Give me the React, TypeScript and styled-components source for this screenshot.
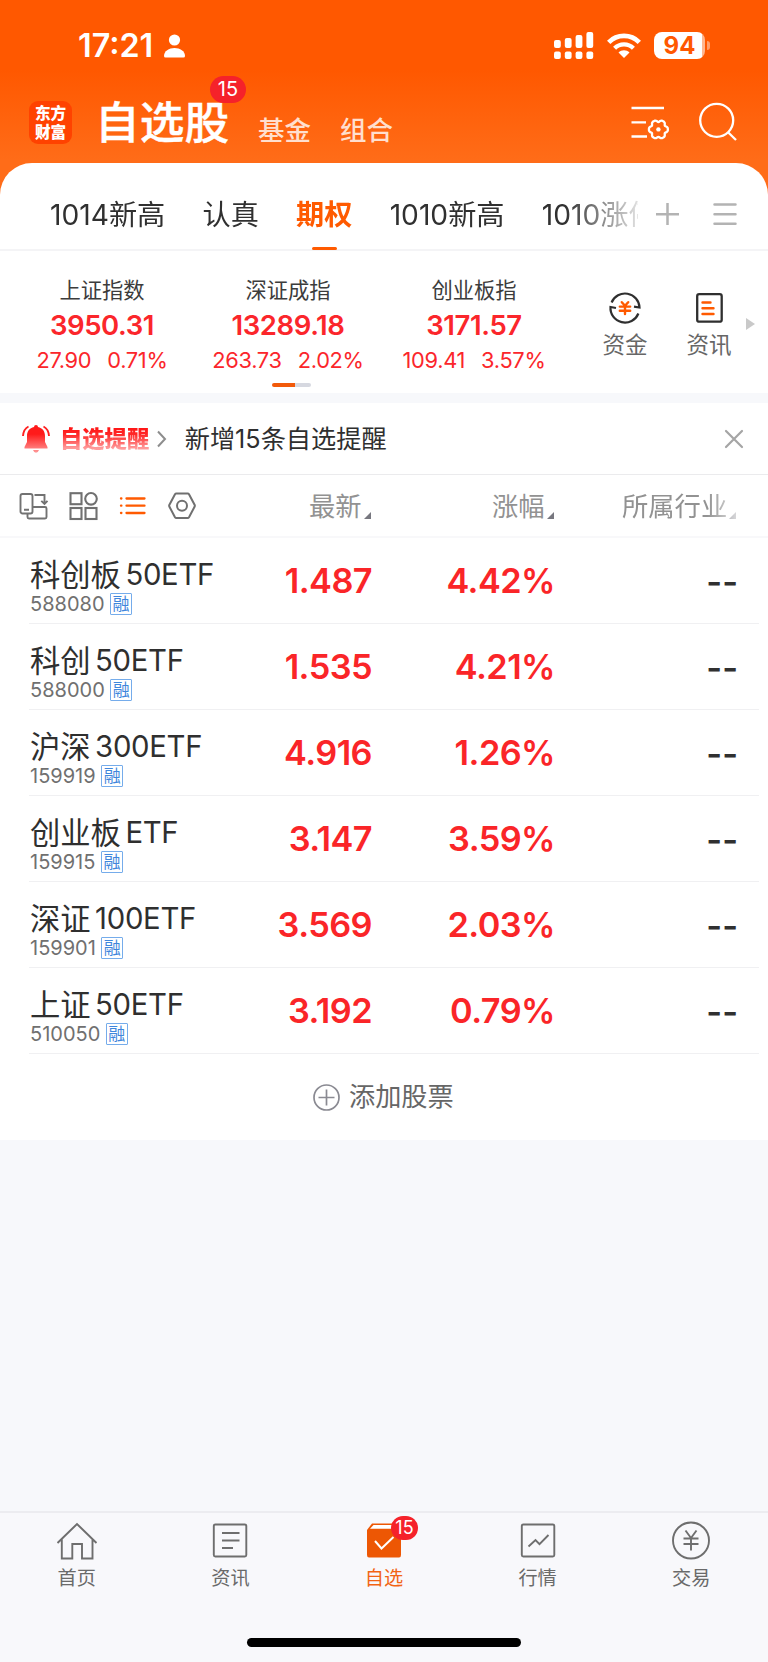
import React from 'react';
import styled, { createGlobalStyle, css } from 'styled-components';

const GlobalStyle = createGlobalStyle`
  * { box-sizing: border-box; }
  body {
    margin: 0;
    background: #f7f8fb;
    font-family: Inter, "Noto Sans CJK SC", sans-serif;
    color: #2f2f2f;
  }
  svg { display: block; flex: none; overflow: visible; }
`;

const Screen = styled.div`
  width: 768px;
  height: 1662px;
  display: flex;
  flex-direction: column;
  overflow: hidden;
  background: #f7f8fb;
`;

const Hero = styled.header`
  height: 198px;
  margin-bottom: -35px;
  flex: none;
  background: linear-gradient(#ff5800 0, #ff5800 70px, #ff6c18 160px);
`;

const StatusBar = styled.div`
  height: 78px;
  padding: 13px 58px 0 78px;
  display: flex;
  align-items: center;
  color: #fff;
`;

const Clock = styled.span`
  font-size: 32.3px;
  line-height: 40px;
  font-weight: 600;
  width: 86px;
  padding-top: 1px;
`;

const StatusIcons = styled.div`
  margin-left: auto;
  display: flex;
  align-items: center;
`;

const Battery = styled.div`
  width: 51px;
  height: 27px;
  margin-left: 13px;
  border-radius: 8px;
  background: linear-gradient(90deg, #fff 94%, #ffb68f 94%);
  color: #ff5800;
  font-size: 24px;
  line-height: 27px;
  font-weight: 700;
  text-align: center;
`;

const BatteryTip = styled.div`
  width: 3px;
  height: 9px;
  margin-left: 2px;
  border-radius: 0 4px 4px 0;
  background: #ff9d6b;
`;

const TitleBar = styled.div`
  height: 85px;
  padding: 0 31px 0 29px;
  display: flex;
`;

const Logo = styled.div`
  width: 43px;
  height: 43px;
  margin-top: 23px;
  border-radius: 9px;
  background: #ff4200;
  color: #fff;
  font-family: "Noto Sans CJK SC", sans-serif;
  font-size: 15.6px;
  line-height: 18.5px;
  font-weight: 900;
  text-align: center;
  padding-top: 2px;
`;

const Title = styled.h1`
  position: relative;
  margin: 21px 0 0 23px;
  width: 163px;
  font-size: 44.7px;
  line-height: 48px;
  font-weight: 500;
  -webkit-text-stroke: 0.4px #fff;
  color: #fff;
`;

const Badge = styled.span<{ $small?: boolean }>`
  position: absolute;
  color: #fff;
  background: #f5222a;
  text-align: center;
  font-weight: 400;
  -webkit-text-stroke: 0;
  ${(p) =>
    p.$small
      ? css`left: 27px; top: -5px; width: 27px; height: 24px; border-radius: 12px; font-size: 18px; line-height: 24px;`
      : css`left: 115px; top: -23px; width: 36px; height: 27px; border-radius: 14px; font-size: 20px; line-height: 27px;`}
`;

const TitleLink = styled.span`
  width: 82px;
  margin-top: 34px;
  font-size: 26.5px;
  line-height: 36px;
  color: #ffdfce;
  font-weight: 500;
`;

const TitleIcons = styled.div`
  margin-left: auto;
  padding-top: 25px;
  display: flex;
  gap: 30px;
`;

const Sheet = styled.main`
  height: 977px;
  flex: none;
  background: #fff;
  border-radius: 32px 32px 0 0;
  position: relative;
`;

const GroupTabs = styled.nav`
  height: 88px;
  border-bottom: 2px solid #f4f4f6;
  padding-left: 50px;
  display: flex;
`;

const TabStrip = styled.div`
  width: 588px;
  height: 88px;
  display: flex;
  gap: 37.2px;
  overflow: hidden;
  white-space: nowrap;
  mask-image: linear-gradient(90deg, #000 515px, rgba(0, 0, 0, 0.15) 588px);
`;

const GroupTab = styled.span<{ $active?: boolean }>`
  flex: none;
  height: 88px;
  display: flex;
  flex-direction: column;
  align-items: center;
  font-size: 28.2px;
  line-height: 40px;
  padding-top: 32px;
  color: ${(p) => (p.$active ? '#ff5a00' : '#303030')};
  font-weight: ${(p) => (p.$active ? 700 : 400)};
`;

const TabMark = styled.i`
  width: 25px;
  height: 3px;
  margin-top: 12px;
  border-radius: 2px;
  background: #ff5a00;
`;

const TabTools = styled.div`
  display: flex;
  gap: 35px;
  padding: 40px 0 0 18px;
`;

const IndexPanel = styled.section`
  height: 142px;
  padding-left: 9px;
  display: flex;
`;

const Indices = styled.div`
  width: 558px;
  margin-right: 16px;
  flex: none;
  display: grid;
  grid-template-columns: repeat(3, 186px);
  grid-template-rows: 132px 4px;
`;

const IndexCard = styled.div`
  display: flex;
  flex-direction: column;
  align-items: center;
  padding-top: 23px;
  color: #fb262b;
`;

const IndexName = styled.span`
  font-size: 21.3px;
  line-height: 32px;
  color: #3c3c3c;
`;

const IndexValue = styled.span`
  font-size: 27.5px;
  line-height: 38px;
  font-weight: 600;
  letter-spacing: -0.4px;
`;

const IndexChange = styled.span`
  display: flex;
  gap: 16px;
  font-size: 21.8px;
  line-height: 32px;
  letter-spacing: -0.3px;
`;

const Pager = styled.div`
  grid-column: 2;
  justify-self: center;
  margin-left: 7px;
  width: 39px;
  height: 4px;
  border-radius: 2px;
  background: linear-gradient(90deg, #f25a0a 60%, #d6d8e0 60%);
`;

const Shortcut = styled.div`
  width: 84px;
  flex: none;
  padding-top: 41px;
  display: flex;
  flex-direction: column;
  align-items: center;
  font-size: 22.5px;
  line-height: 32px;
  color: #666;
  svg { margin-bottom: 5px; }
`;

const MoreArrow = styled.i`
  margin: 67px 0 0 -5px;
  flex: none;
  width: 0;
  height: 0;
  border: solid transparent;
  border-width: 6px 0 6px 9px;
  border-left-color: #c9c9c9;
`;

const Divider = styled.div`
  height: 10px;
  background: #f7f8fb;
`;

const AlertBar = styled.section`
  height: 72px;
  border-bottom: 1px solid #ebebed;
  display: flex;
  align-items: center;
  padding: 0 25px 0 21px;
`;

const AlertLabel = styled.b`
  margin: -3px 8px 0 9px;
  font-family: "Noto Sans CJK SC", sans-serif;
  font-size: 22.3px;
  line-height: 32px;
  font-weight: 900;
  background: linear-gradient(#ff1212 6px, #ff2a2a 14px, #ff9a9a 27px);
  background-clip: text;
  color: transparent;
`;

const AlertText = styled.span`
  flex: 1;
  margin-left: 18.5px;
  font-size: 25.2px;
  line-height: 36px;
`;

const TableHead = styled.div`
  height: 63px;
  border-bottom: 2px solid #f8f8fa;
  padding-left: 19px;
  display: flex;
  align-items: center;
`;

const ViewModes = styled.div`
  width: 290px;
  display: flex;
  align-items: center;
  gap: 21px;
`;

const HeadCell = styled.span<{ $width: number; $faded?: boolean }>`
  width: ${(p) => p.$width}px;
  padding-top: 2px;
  display: flex;
  align-items: flex-end;
  font-size: 26.3px;
  line-height: 38px;
  color: #929292;
  ${(p) => p.$faded && css`mask-image: linear-gradient(90deg, #000 85px, rgba(0, 0, 0, 0.2) 118px);`}
`;

const Row = styled.div`
  height: 86px;
  margin: 0 9px 0 29px;
  padding-left: 1px;
  border-bottom: 1px solid #f0f0f2;
  display: grid;
  grid-template-columns: 195px 147px 183px 183px;
  font-weight: 600;
  text-align: right;
`;

const Stock = styled.div`
  padding-top: 17px;
  text-align: left;
  font-weight: 400;
  white-space: nowrap;
`;

const StockName = styled.div`
  display: flex;
  gap: 4.5px;
  height: 40px;
  font-size: 30.3px;
  line-height: 40px;
`;

const StockSuffix = styled.span`
  font-size: 29.3px;
  letter-spacing: -0.3px;
`;

const StockCode = styled.div`
  display: flex;
  align-items: center;
  gap: 5.5px;
  height: 22px;
  margin-top: -2px;
  font-size: 20px;
  line-height: 22px;
  color: #707070;
`;

const MarginTag = styled.span`
  width: 22px;
  height: 22px;
  border: 1.5px solid #75aceb;
  border-radius: 1px;
  font-family: "Noto Sans CJK SC", sans-serif;
  font-size: 17px;
  line-height: 18px;
  text-align: center;
  color: #3f86dc;
`;

const Quote = styled.span`
  padding-top: 22px;
  font-size: 34.3px;
  line-height: 42px;
  letter-spacing: -0.55px;
  color: #fa2528;
`;

const Empty = styled.span`
  padding-top: 23px;
  font-size: 34px;
  line-height: 42px;
  color: #303030;
`;

const AddStock = styled.div`
  height: 86px;
  padding-left: 313px;
  display: flex;
  align-items: center;
  gap: 9px;
  font-size: 26.2px;
  line-height: 38px;
  color: #666;
`;

const BottomNav = styled.nav`
  margin-top: auto;
  height: 151px;
  border-top: 2px solid #ececf0;
  background: #f8f8fb;
  display: grid;
  grid-template-columns: repeat(5, 1fr);
  grid-template-rows: 125px 9px;
`;

const NavItem = styled.div<{ $active?: boolean }>`
  padding-top: 8px;
  display: flex;
  flex-direction: column;
  align-items: center;
  gap: 3px;
  font-size: 19.2px;
  line-height: 28px;
  color: ${(p) => (p.$active ? '#f26414' : '#6a6a6a')};
`;

const NavIcon = styled.div`
  position: relative;
  width: 40px;
  height: 40px;
`;

const HomeBar = styled.div`
  grid-column: 1 / -1;
  justify-self: center;
  width: 274px;
  height: 9px;
  border-radius: 5px;
  background: #000;
`;

const gearPath = (cx: number, cy: number, r: number, depth: number) => {
  const pts: string[] = [];
  for (let i = 0; i <= 96; i++) {
    const a = (i / 96) * Math.PI * 2;
    const k = r + depth * (Math.cos(6 * a) - 0.25 * Math.cos(12 * a));
    pts.push(`${(cx + k * Math.cos(a)).toFixed(2)} ${(cy + k * Math.sin(a)).toFixed(2)}`);
  }
  return `M${pts.join('L')}Z`;
};

const PersonIcon = () => (
  <svg width="21" height="24" viewBox="0 0 21 24" fill="#fff">
    <circle cx="10.5" cy="6" r="5.6" />
    <path d="M0 22C0 17 5 14 10.5 14S21 17 21 22Q21 23.5 19.5 23.5H1.500Q0 23.5 0 22Z" />
  </svg>
);

const SignalIcon = () => (
  <svg width="39" height="27" viewBox="0 0 39 27" fill="#fff">
    {[8, 6, 3, 0].map((top, i) => (
      <g key={i}>
        <rect x={i * 10.8} y={top} width="6.8" height={16 - top} rx="2" />
        <rect x={i * 10.8} y="19.500" width="6.8" height="7.500" rx="2" />
      </g>
    ))}
  </svg>
);

const WifiGlyph = styled.svg`
  margin-left: 14px;
`;

const WifiIcon = () => (
  <WifiGlyph width="34" height="25" viewBox="0 0 34 25">
    <path d="M1.700 9.300C10 0.800 24 0.800 32.300 9.300" fill="none" stroke="#fff" strokeWidth="4.700" />
    <path d="M7.600 15.200C12.800 10 21.200 10 26.400 15.200" fill="none" stroke="#fff" strokeWidth="4.300" />
    <path d="M11.500 19.400C14.500 16.400 19.500 16.400 22.500 19.400L17 25Z" fill="#fff" />
  </WifiGlyph>
);

const FilterIcon = () => (
  <svg width="38" height="36" viewBox="0 0 38 36" fill="none" stroke="#fff" strokeWidth="2.300">
    <path d="M0.500 5H33M0.500 19.300H15M0.500 33.500H16" />
    <path d={gearPath(27.400, 26.400, 8.700, 1)} />
    <circle cx="27.400" cy="26.400" r="2.200" fill="#fff" stroke="none" />
  </svg>
);

const SearchIcon = () => (
  <svg width="38" height="38" viewBox="0 0 38 38" fill="none" stroke="#fff" strokeWidth="2.300">
    <circle cx="17.700" cy="17.300" r="16.500" />
    <path d="M28.800 29L37 37" />
  </svg>
);

const PlusIcon = () => (
  <svg width="23" height="22" viewBox="0 0 23 22" stroke="#b3b3b3" strokeWidth="2.500">
    <path d="M11.500 0V22M0 11.200H23" />
  </svg>
);

const MenuIcon = () => (
  <svg width="22" height="22" viewBox="0 0 22 22" stroke="#b3b3b3" strokeWidth="2.500">
    <path d="M0.500 1.500H21.500M0.500 11.200H21.500M0.500 20.800H21.500" strokeLinecap="round" />
  </svg>
);

const FundsIcon = () => (
  <svg width="32" height="32" viewBox="0 0 32 32" fill="none" stroke="#2f2f2f" strokeWidth="2.200">
    <path d="M2.600 10.500A14.500 14.500 0 0 1 30.500 15.500L25 14.600" />
    <path d="M29.400 21.500A14.500 14.500 0 0 1 1.500 15L7 16" />
    <g stroke="#ff5a00" strokeWidth="2.400" strokeLinecap="round">
      <path d="M12.800 10.200L16 13.800L19.200 10.200M10.800 14.600H21.200M10.800 18.800H21.200M16 14V22" />
    </g>
  </svg>
);

const NewsIcon = () => (
  <svg width="32" height="32" viewBox="0 0 32 32" fill="none" stroke="#2f2f2f" strokeWidth="2.300">
    <rect x="4.200" y="2.200" width="24.500" height="27.500" rx="2" />
    <path d="M9.500 10.500H17.500M9.500 16.300H20.500M9.500 22H20.500" stroke="#ff5a00" strokeWidth="2.400" strokeLinecap="round" />
  </svg>
);

const BellIcon = () => (
  <svg width="30" height="29" viewBox="0 0 30 29">
    <defs>
      <linearGradient id="bell" x1="0" y1="0" x2="0" y2="29" gradientUnits="userSpaceOnUse">
        <stop offset="0.350" stopColor="#ff1a1a" />
        <stop offset="1" stopColor="#ff9c9c" />
      </linearGradient>
    </defs>
    <path d="M15 1A2 2 0 0 1 17 3C21.500 4 24 7 24 12V18L26.500 23V24.500H3.500V23L6 18V12C6 7 8.500 4 13 3A2 2 0 0 1 15 1ZM12 26H18Q17 28.800 15 28.800T12 26Z" fill="url(#bell)" />
    <path d="M7.500 2.500Q2.500 5 2 12M22.500 2.500Q27.500 5 28 12" fill="none" stroke="#ff2020" strokeWidth="1.900" />
  </svg>
);

const ChevronIcon = () => (
  <svg width="9" height="16" viewBox="0 0 9 16" fill="none" stroke="#8d8d8d" strokeWidth="2">
    <path d="M1 0.500L8 8L1 15.500" />
  </svg>
);

const CloseIcon = () => (
  <svg width="18" height="18" viewBox="0 0 18 18" stroke="#a5a5a5" strokeWidth="2.200" strokeLinecap="round">
    <path d="M1 1L17 17M17 1L1 17" />
  </svg>
);

const DeviceIcon = () => (
  <svg width="29" height="28" viewBox="0 0 29 28" fill="none" stroke="#727272" strokeWidth="1.900">
    <rect x="1.500" y="2" width="12" height="19.500" rx="2" />
    <path d="M5 17.700H10M15.500 3H25.500V11M22.300 8.800L25.500 12L28.500 8.800M13.500 15H26Q27.500 15 27.500 16.500V25Q27.500 26.500 26 26.500H10Q8.500 26.500 8.500 25V21.500" />
  </svg>
);

const GridIcon = () => (
  <svg width="29" height="28" viewBox="0 0 29 28" fill="none" stroke="#707070" strokeWidth="2.100">
    <rect x="1.500" y="1.200" width="11" height="11" />
    <circle cx="22" cy="6.800" r="5.800" />
    <rect x="1.500" y="16" width="11" height="11" />
    <rect x="16.500" y="16" width="11" height="11" />
  </svg>
);

const ListIcon = () => (
  <svg width="28" height="28" viewBox="0 0 28 28" fill="none" stroke="#ff5a00" strokeWidth="2.300" strokeLinecap="round">
    <path d="M7.500 6.500H25.500M7.500 13.700H25.500M7.500 21H25.500M2 6.500H2.400M2 13.700H2.400M2 21H2.400" />
  </svg>
);

const HexIcon = () => (
  <svg width="28" height="28" viewBox="0 0 28 28" fill="none" stroke="#707070" strokeWidth="2" strokeLinejoin="round">
    <path d="M8.300 1.500H19.700Q20.500 1.500 21 2.300L26.700 13Q27 13.700 26.700 14.500L21 25.200Q20.500 26 19.700 26H8.300Q7.500 26 7 25.200L1.300 14.500Q1 13.700 1.300 13L7 2.300Q7.500 1.500 8.300 1.500Z" />
    <circle cx="14" cy="13.700" r="5" />
  </svg>
);

const SortGlyph = styled.svg`
  margin: 0 0 7px 2px;
`;

const SortIcon = () => (
  <SortGlyph width="7" height="7" viewBox="0 0 7 7">
    <path d="M7 0V7H0Z" fill="#77777f" />
  </SortGlyph>
);

const AddIcon = () => (
  <svg width="27" height="27" viewBox="0 0 27 27" fill="none" stroke="#8a8a92" strokeWidth="1.700">
    <circle cx="13.500" cy="13.500" r="12.500" />
    <path d="M13.500 5.500V21.500M5.500 13.500H21.500" />
  </svg>
);

const NavSvg = ({ children }: { children: React.ReactNode }) => (
  <svg width="40" height="40" viewBox="0 0 40 40" fill="none" stroke="#6e6e6e" strokeWidth="1.900">
    {children}
  </svg>
);

const navItems = [
  {
    label: '首页',
    icon: <path d="M0.500 22L20 3L39.500 22M4.800 18V37.500H15.300V23H25V37.500H35.500V18" />,
  },
  {
    label: '资讯',
    icon: (
      <>
        <rect x="3.800" y="3.500" width="32.500" height="32" rx="1.500" />
        <path d="M12 12H29.500M12 19.500H29.500M12 27H23" strokeWidth="2.100" />
      </>
    ),
  },
  {
    label: '自选',
    active: true,
    icon: (
      <>
        <path d="M3 9L8 2.500H35Q37 2.500 37 4.500V34Q37 36.500 35 36.500H5Q3 36.500 3 34Z" fill="#ed5704" stroke="none" />
        <path d="M6 7.800L9.500 4H34V7.800Z" fill="#fff" stroke="none" />
        <path d="M11 20L17.500 27.500L29.500 16" stroke="#fff" strokeWidth="2" />
      </>
    ),
  },
  {
    label: '行情',
    icon: (
      <>
        <rect x="3.800" y="3.500" width="32.500" height="32" rx="1.500" />
        <path d="M10.500 25.500L17.500 19L21.500 23.200L30.500 14" />
      </>
    ),
  },
  {
    label: '交易',
    icon: (
      <>
        <circle cx="20" cy="19.500" r="18" />
        <path d="M14.500 9.500L20 17L25.500 9.500M12.500 17.500H27.500M12.500 23H27.500M20 17V29.500" />
      </>
    ),
  },
];

const indices = [
  ['上证指数', '3950.31', '27.90', '0.71%'],
  ['深证成指', '13289.18', '263.73', '2.02%'],
  ['创业板指', '3171.57', '109.41', '3.57%'],
];

const stocks = [
  ['科创板', '50ETF', '588080', '1.487', '4.42%'],
  ['科创', '50ETF', '588000', '1.535', '4.21%'],
  ['沪深', '300ETF', '159919', '4.916', '1.26%'],
  ['创业板', 'ETF', '159915', '3.147', '3.59%'],
  ['深证', '100ETF', '159901', '3.569', '2.03%'],
  ['上证', '50ETF', '510050', '3.192', '0.79%'],
];

export default function App() {
  return (
    <>
      <GlobalStyle />
      <Screen>
        <Hero>
          <StatusBar>
            <Clock>17:21</Clock>
            <PersonIcon />
            <StatusIcons>
              <SignalIcon />
              <WifiIcon />
              <Battery>94</Battery>
              <BatteryTip />
            </StatusIcons>
          </StatusBar>
          <TitleBar>
            <Logo>东方<br />财富</Logo>
            <Title>自选股<Badge>15</Badge></Title>
            <TitleLink>基金</TitleLink>
            <TitleLink>组合</TitleLink>
            <TitleIcons>
              <FilterIcon />
              <SearchIcon />
            </TitleIcons>
          </TitleBar>
        </Hero>

        <Sheet>
          <GroupTabs>
            <TabStrip>
              <GroupTab>1014新高</GroupTab>
              <GroupTab>认真</GroupTab>
              <GroupTab $active>期权<TabMark /></GroupTab>
              <GroupTab>1010新高</GroupTab>
              <GroupTab>1010涨停</GroupTab>
            </TabStrip>
            <TabTools>
              <PlusIcon />
              <MenuIcon />
            </TabTools>
          </GroupTabs>

          <IndexPanel>
            <Indices>
              {indices.map(([name, value, diff, pct]) => (
                <IndexCard key={name}>
                  <IndexName>{name}</IndexName>
                  <IndexValue>{value}</IndexValue>
                  <IndexChange><span>{diff}</span><span>{pct}</span></IndexChange>
                </IndexCard>
              ))}
              <Pager />
            </Indices>
            <Shortcut><FundsIcon />资金</Shortcut>
            <Shortcut><NewsIcon />资讯</Shortcut>
            <MoreArrow />
          </IndexPanel>
          <Divider />

          <AlertBar>
            <BellIcon />
            <AlertLabel>自选提醒</AlertLabel>
            <ChevronIcon />
            <AlertText>新增15条自选提醒</AlertText>
            <CloseIcon />
          </AlertBar>

          <TableHead>
            <ViewModes>
              <DeviceIcon />
              <GridIcon />
              <ListIcon />
              <HexIcon />
            </ViewModes>
            <HeadCell $width={183}>最新<SortIcon /></HeadCell>
            <HeadCell $width={130}>涨幅<SortIcon /></HeadCell>
            <HeadCell $width={120} $faded>所属行业<SortIcon /></HeadCell>
          </TableHead>

          {stocks.map(([name, suffix, code, price, pct]) => (
            <Row key={code}>
              <Stock>
                <StockName>{name}<StockSuffix>{suffix}</StockSuffix></StockName>
                <StockCode>{code}<MarginTag>融</MarginTag></StockCode>
              </Stock>
              <Quote>{price}</Quote>
              <Quote>{pct}</Quote>
              <Empty>--</Empty>
            </Row>
          ))}

          <AddStock><AddIcon />添加股票</AddStock>
        </Sheet>

        <BottomNav>
          {navItems.map((item) => (
            <NavItem key={item.label} $active={item.active}>
              <NavIcon>
                <NavSvg>{item.icon}</NavSvg>
                {item.active && <Badge $small>15</Badge>}
              </NavIcon>
              {item.label}
            </NavItem>
          ))}
          <HomeBar />
        </BottomNav>
      </Screen>
    </>
  );
}
